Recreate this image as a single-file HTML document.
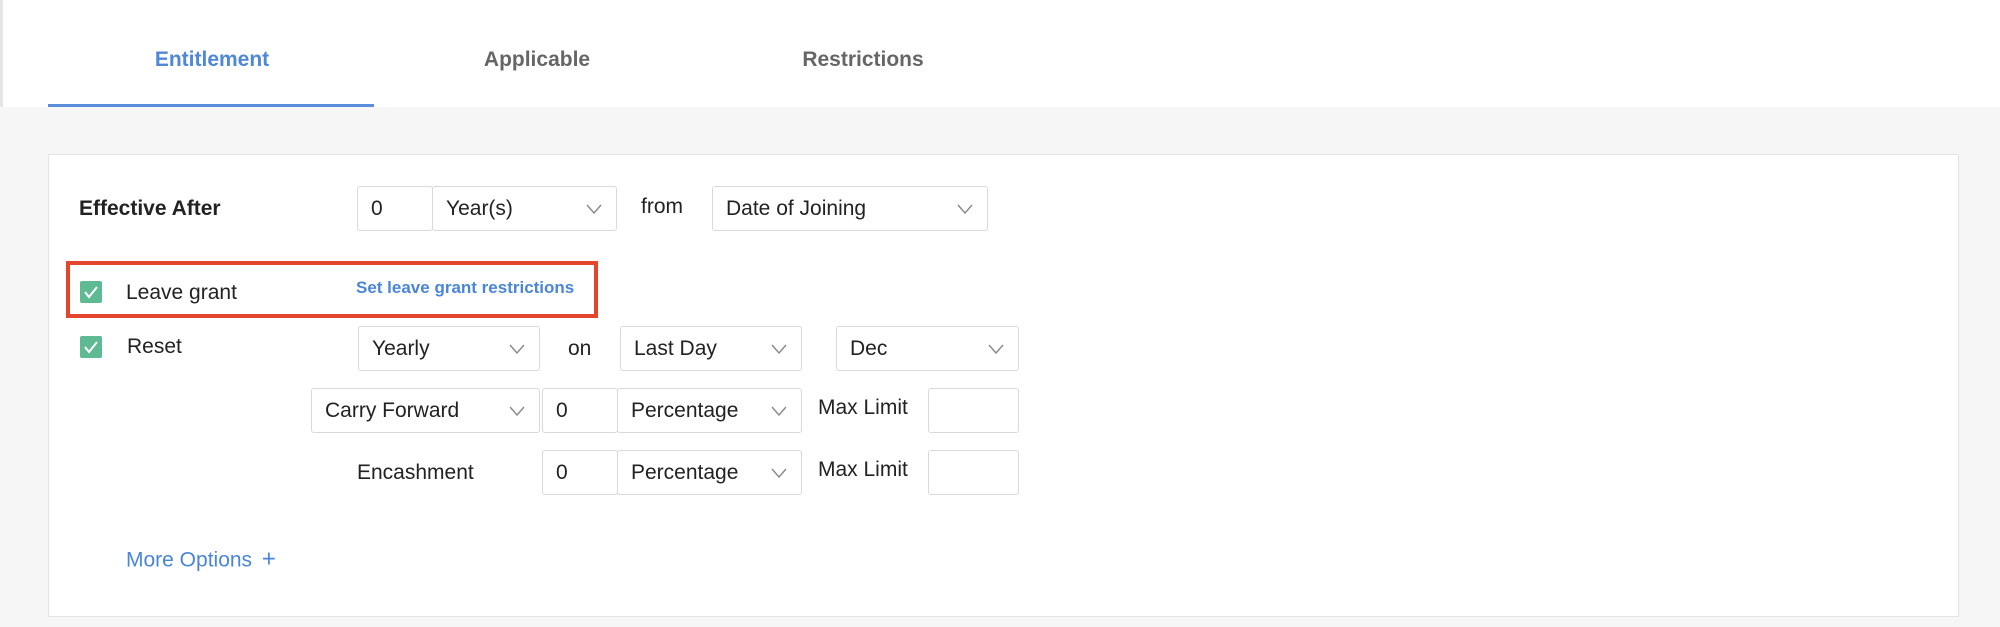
<!DOCTYPE html>
<html><head><meta charset="utf-8"><style>
*{box-sizing:border-box;margin:0;padding:0}
body{width:2000px;height:627px;background:#f6f6f6;font-family:"Liberation Sans",sans-serif;color:#222;position:relative;overflow:hidden}
.hdr{position:absolute;left:0;top:0;width:2000px;height:107px;background:#fff;border-left:3px solid #e6e6e6}
.tab{position:absolute;top:48px;font-size:21px;font-weight:bold;color:#666;transform:translateX(-50%)}
.ul{position:absolute;left:48px;top:104px;width:326px;height:3px;background:#5a8fdc}
.card{position:absolute;left:48px;top:154px;width:1911px;height:463px;background:#fff;border:1px solid #e4e4e4}
.a{position:absolute}
.t{position:absolute;font-size:21px;line-height:24px;transform:translateY(-50%)}
.box{position:absolute;border:1px solid #d9d9d9;border-radius:3px;background:#fff;font-size:21px;padding-left:13px;display:flex;align-items:center}
.box svg{position:absolute;right:14px;top:50%;margin-top:-5px}
.cb{position:absolute;width:22px;height:22px;background:#5dba93;border-radius:2px}
</style></head><body>
<div class="hdr"></div>
<div class="tab" style="left:212px;color:#4f87d9">Entitlement</div>
<div class="tab" style="left:537px">Applicable</div>
<div class="tab" style="left:863px">Restrictions</div>
<div class="ul"></div>
<div class="card"></div>

<div class="t" style="left:79px;top:209px;font-weight:bold">Effective After</div>
<div class="box" style="left:357px;top:186px;width:76px;height:45px">0</div>
<div class="box" style="left:432px;top:186px;width:185px;height:45px">Year(s)<svg width="16" height="10"><path d="M1 1l7 8 7-8" fill="none" stroke="#888" stroke-width="1.4"/></svg></div>
<div class="t" style="left:641px;top:207px">from</div>
<div class="box" style="left:712px;top:186px;width:276px;height:45px">Date of Joining<svg width="16" height="10"><path d="M1 1l7 8 7-8" fill="none" stroke="#888" stroke-width="1.4"/></svg></div>

<div class="a" style="left:66px;top:261px;width:532px;height:57px;border:4px solid #e5452d"></div>
<div class="cb" style="left:80px;top:281px"><svg width="22" height="22"><path d="M5 11l4 5 8-10" fill="none" stroke="#fff" stroke-width="2"/></svg></div>
<div class="t" style="left:126px;top:293px">Leave grant</div>
<div class="t" style="left:356px;top:288px;color:#4a86d8;font-weight:bold;font-size:17px">Set leave grant restrictions</div>

<div class="cb" style="left:80px;top:336px"><svg width="22" height="22"><path d="M5 11l4 5 8-10" fill="none" stroke="#fff" stroke-width="2"/></svg></div>
<div class="t" style="left:127px;top:347px">Reset</div>
<div class="box" style="left:358px;top:326px;width:182px;height:45px">Yearly<svg width="16" height="10"><path d="M1 1l7 8 7-8" fill="none" stroke="#888" stroke-width="1.4"/></svg></div>
<div class="t" style="left:568px;top:349px">on</div>
<div class="box" style="left:620px;top:326px;width:182px;height:45px">Last Day<svg width="16" height="10"><path d="M1 1l7 8 7-8" fill="none" stroke="#888" stroke-width="1.4"/></svg></div>
<div class="box" style="left:836px;top:326px;width:183px;height:45px">Dec<svg width="16" height="10"><path d="M1 1l7 8 7-8" fill="none" stroke="#888" stroke-width="1.4"/></svg></div>

<div class="box" style="left:311px;top:388px;width:229px;height:45px">Carry Forward<svg width="16" height="10"><path d="M1 1l7 8 7-8" fill="none" stroke="#888" stroke-width="1.4"/></svg></div>
<div class="box" style="left:542px;top:388px;width:76px;height:45px">0</div>
<div class="box" style="left:617px;top:388px;width:185px;height:45px">Percentage<svg width="16" height="10"><path d="M1 1l7 8 7-8" fill="none" stroke="#888" stroke-width="1.4"/></svg></div>
<div class="t" style="left:818px;top:408px">Max Limit</div>
<div class="box" style="left:928px;top:388px;width:91px;height:45px"></div>

<div class="t" style="left:357px;top:473px">Encashment</div>
<div class="box" style="left:542px;top:450px;width:76px;height:45px">0</div>
<div class="box" style="left:617px;top:450px;width:185px;height:45px">Percentage<svg width="16" height="10"><path d="M1 1l7 8 7-8" fill="none" stroke="#888" stroke-width="1.4"/></svg></div>
<div class="t" style="left:818px;top:470px">Max Limit</div>
<div class="box" style="left:928px;top:450px;width:91px;height:45px"></div>

<div class="t" style="left:126px;top:560px;color:#4a86d8">More Options <span style="font-size:24px;margin-left:4px">+</span></div>
</body></html>
